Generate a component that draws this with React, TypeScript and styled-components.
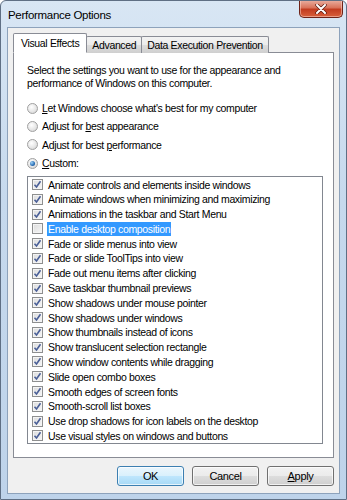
import React from "react";
import styled, { createGlobalStyle } from "styled-components";

const GlobalStyle = createGlobalStyle`
  html, body {
    margin: 0;
    padding: 0;
    background: #ffffff;
  }
  * {
    box-sizing: border-box;
  }
`;

const Window = styled.div`
  width: 347px;
  height: 500px;
  display: flex;
  flex-direction: column;
  border: 1px solid #5f6f84;
  border-radius: 6px 6px 0 0;
  background: linear-gradient(to bottom, #d8e6f4 0%, #c6d9ed 40%, #bed3ea 100%);
  font-family: "Liberation Sans", Arial, sans-serif;
  font-size: 10.5px;
  letter-spacing: -0.35px;
  color: #000;
  overflow: hidden;
`;

const TitleBar = styled.div`
  height: 26px;
  display: flex;
  justify-content: space-between;
  align-items: flex-start;
  padding-left: 7px;
  flex-shrink: 0;
`;

const Title = styled.div`
  font-size: 11.5px;
  letter-spacing: -0.3px;
  line-height: 12px;
  margin-top: 8px;
`;

const CloseButton = styled.div`
  width: 44px;
  height: 18px;
  margin-right: 3px;
  margin-top: -1px;
  border: 1px solid #6e2318;
  border-top: none;
  border-radius: 0 0 5px 5px;
  background: linear-gradient(to bottom, #eab1a3 0%, #d9735b 45%, #c23c20 55%, #d8603c 100%);
  box-shadow: inset 0 0 0 1px rgba(255, 220, 210, 0.5);
  display: flex;
  align-items: center;
  justify-content: center;
`;

const Client = styled.div`
  flex: 1;
  margin: 0 6px 5px 6px;
  border: 1px solid #8da2bb;
  background: #f0f0f0;
  display: flex;
  flex-direction: column;
  padding: 5px 5px 0 5px;
`;

const TabStrip = styled.div`
  display: flex;
  align-items: flex-end;
  height: 20px;
  position: relative;
  z-index: 1;
`;

const Tab = styled.div<{ $active?: boolean }>`
  height: ${(p) => (p.$active ? "20px" : "17px")};
  padding: 0 ${(p) => (p.$active ? "7px" : "5px")};
  border: 1px solid #898c95;
  border-bottom: ${(p) => (p.$active ? "1px solid #ffffff" : "none")};
  margin-left: ${(p) => (p.$active ? "0" : "-1px")};
  background: ${(p) =>
    p.$active ? "#ffffff" : "linear-gradient(to bottom, #f3f3f3 0%, #ebebeb 50%, #dddddd 51%, #cfcfcf 100%)"};
  border-radius: 2px 2px 0 0;
  display: flex;
  align-items: center;
  white-space: nowrap;
  position: relative;
  z-index: ${(p) => (p.$active ? 2 : 1)};
  &:first-child {
    margin-left: 0;
  }
`;

const Panel = styled.div`
  height: 406px;
  margin-top: -1px;
  width: 321px;
  background: #ffffff;
  border: 1px solid #898c95;
  padding: 11px 10px 0 13px;
  display: flex;
  flex-direction: column;
`;

const Description = styled.p`
  margin: 0;
  line-height: 12.5px;
  width: 275px;
`;

const RadioGroup = styled.div`
  margin-top: 10px;
  display: flex;
  flex-direction: column;
`;

const RadioRow = styled.label`
  height: 18.3px;
  display: flex;
  align-items: center;
  gap: 4px;
`;

const RadioCircle = styled.span<{ $checked?: boolean }>`
  width: 11px;
  height: 11px;
  border-radius: 50%;
  border: 1px solid #a0a0a0;
  background: radial-gradient(circle at 40% 35%, #ffffff 0%, #e4e4e4 60%, #cacaca 100%);
  display: flex;
  align-items: center;
  justify-content: center;
  flex-shrink: 0;
  &::after {
    content: "";
    display: ${(p) => (p.$checked ? "block" : "none")};
    width: 5px;
    height: 5px;
    border-radius: 50%;
    background: radial-gradient(circle at 35% 35%, #9fd2f7 0%, #2a6fb5 60%, #0d3f86 100%);
  }
`;

const ListBox = styled.div`
  margin-top: 4px;
  width: 296px;
  height: 268px;
  border: 1px solid #828790;
  display: flex;
  flex-direction: column;
  padding: 0 0 0 4px;
`;

const CheckRow = styled.div`
  height: 14.8px;
  display: flex;
  align-items: center;
  gap: 5px;
  white-space: nowrap;
`;

const CheckBox = styled.span`
  width: 11px;
  height: 11px;
  border: 1px solid #8e8f8f;
  background: linear-gradient(135deg, #dcdcdc 0%, #f6f6f6 100%);
  box-shadow: inset 0 0 0 1px #f4f4f4;
  display: flex;
  align-items: center;
  justify-content: center;
  flex-shrink: 0;
`;

const CheckLabel = styled.span<{ $selected?: boolean }>`
  line-height: 14px;
  padding: 0 1px;
  margin-left: -1px;
  background: ${(p) => (p.$selected ? "#3399ff" : "transparent")};
  color: ${(p) => (p.$selected ? "#ffffff" : "#000000")};
`;

const ButtonRow = styled.div`
  display: flex;
  justify-content: flex-end;
  gap: 8px;
  margin-top: 8px;
  width: 321px;
`;

const Button = styled.div<{ $primary?: boolean }>`
  width: 67px;
  height: 20px;
  border: 1px solid ${(p) => (p.$primary ? "#3c7fb1" : "#707070")};
  border-radius: 3px;
  background: ${(p) =>
    p.$primary
      ? "linear-gradient(to bottom, #eaf6fd 0%, #d9f0fc 50%, #bee6fd 51%, #a7d9f5 100%)"
      : "linear-gradient(to bottom, #f2f2f2 0%, #ebebeb 50%, #dddddd 51%, #cfcfcf 100%)"};
  box-shadow: inset 0 0 0 1px rgba(255, 255, 255, 0.7);
  display: flex;
  align-items: center;
  justify-content: center;
  font-size: 11px;
`;

const Key = styled.span`
  text-decoration: underline;
`;

const CheckMark = () => (
  <svg width="9" height="9" viewBox="0 0 9 9">
    <path d="M1.5 4.8 L3.5 7 L7.5 1.2" fill="none" stroke="#4a5f97" strokeWidth="1.6" />
  </svg>
);

const effects: { label: string; checked: boolean }[] = [
  { label: "Animate controls and elements inside windows", checked: true },
  { label: "Animate windows when minimizing and maximizing", checked: true },
  { label: "Animations in the taskbar and Start Menu", checked: true },
  { label: "Enable desktop composition", checked: false },
  { label: "Fade or slide menus into view", checked: true },
  { label: "Fade or slide ToolTips into view", checked: true },
  { label: "Fade out menu items after clicking", checked: true },
  { label: "Save taskbar thumbnail previews", checked: true },
  { label: "Show shadows under mouse pointer", checked: true },
  { label: "Show shadows under windows", checked: true },
  { label: "Show thumbnails instead of icons", checked: true },
  { label: "Show translucent selection rectangle", checked: true },
  { label: "Show window contents while dragging", checked: true },
  { label: "Slide open combo boxes", checked: true },
  { label: "Smooth edges of screen fonts", checked: true },
  { label: "Smooth-scroll list boxes", checked: true },
  { label: "Use drop shadows for icon labels on the desktop", checked: true },
  { label: "Use visual styles on windows and buttons", checked: true },
];

const App = () => {
  return (
    <>
      <GlobalStyle />
      <Window>
        <TitleBar>
          <Title>Performance Options</Title>
          <CloseButton>
            <svg width="12" height="10" viewBox="0 0 12 10">
              <path d="M2 1 L10 9 M10 1 L2 9" stroke="#5a1a10" strokeWidth="3.4" strokeLinecap="round" />
              <path d="M2 1 L10 9 M10 1 L2 9" stroke="#ffffff" strokeWidth="2" strokeLinecap="round" />
            </svg>
          </CloseButton>
        </TitleBar>
        <Client>
          <TabStrip>
            <Tab $active>Visual Effects</Tab>
            <Tab>Advanced</Tab>
            <Tab>Data Execution Prevention</Tab>
          </TabStrip>
          <Panel>
            <Description>
              Select the settings you want to use for the appearance and performance of Windows on this computer.
            </Description>
            <RadioGroup>
              <RadioRow>
                <RadioCircle />
                <span>
                  <Key>L</Key>et Windows choose what's best for my computer
                </span>
              </RadioRow>
              <RadioRow>
                <RadioCircle />
                <span>
                  Adjust for <Key>b</Key>est appearance
                </span>
              </RadioRow>
              <RadioRow>
                <RadioCircle />
                <span>
                  Adjust for best <Key>p</Key>erformance
                </span>
              </RadioRow>
              <RadioRow>
                <RadioCircle $checked />
                <span>
                  <Key>C</Key>ustom:
                </span>
              </RadioRow>
            </RadioGroup>
            <ListBox>
              {effects.map((e) => (
                <CheckRow key={e.label}>
                  <CheckBox>{e.checked && <CheckMark />}</CheckBox>
                  <CheckLabel $selected={!e.checked}>{e.label}</CheckLabel>
                </CheckRow>
              ))}
            </ListBox>
          </Panel>
          <ButtonRow>
            <Button $primary>OK</Button>
            <Button>Cancel</Button>
            <Button>
              <Key>A</Key>pply
            </Button>
          </ButtonRow>
        </Client>
      </Window>
    </>
  );
};

export default App;
